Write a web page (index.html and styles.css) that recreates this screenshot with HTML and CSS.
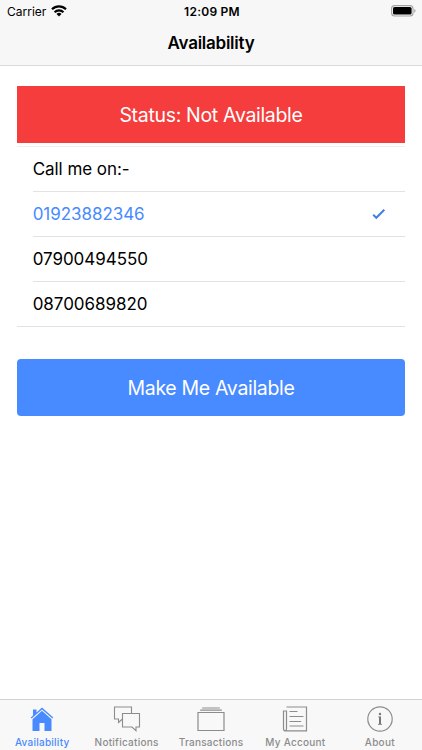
FILE: index.html
```html
<!DOCTYPE html>
<html lang="en">
<head>
    <meta charset="UTF-8">
    <meta name="viewport" content="width=device-width, initial-scale=1.0">
    <title>Availability</title>
    <link rel="stylesheet" href="styles.css">
</head>
<body>
    <header class="header">
        <div class="status-bar">
            <div class="carrier">
                <span>Carrier</span>
                <svg width="16" height="12" viewBox="0 0 16 12">
                    <g fill="none" stroke="#000" stroke-width="2.2">
                        <path d="M1 4.300a10 10 0 0 1 14 0"/>
                        <path d="M3.600 7.200a6.200 6.200 0 0 1 8.800 0"/>
                    </g>
                    <path d="M5.500 9a3.600 3.600 0 0 1 5 0L8 11.400z"/>
                </svg>
            </div>
            <div class="time">12:09 PM</div>
            <div class="battery">
                <svg width="26" height="12" viewBox="0 0 26 12">
                    <rect x=".6" y=".6" width="21.4" height="10.4" rx="3" fill="none" stroke="#a3a3a3" stroke-width="1.1"/>
                    <rect x="2" y="2" width="18.6" height="7.6" rx="1.6"/>
                    <path d="M23.3 4v3.8c1.6-.7 1.6-3.1 0-3.8z" fill="#999"/>
                </svg>
            </div>
        </div>
        <h1>Availability</h1>
    </header>

    <main class="content">
        <div class="status">Status: Not Available</div>

        <ul class="phone-list">
            <li class="item">Call me on:-</li>
            <li class="item selected">
                <span>01923882346</span>
                <svg width="14" height="12" viewBox="0 0 14 12">
                    <path d="M1.2 6.8l3.1 3L12.3 1.7" fill="none" stroke="#3f7fe6" stroke-width="2"/>
                </svg>
            </li>
            <li class="item">07900494550</li>
            <li class="item">08700689820</li>
        </ul>

        <button type="button" class="button">Make Me Available</button>
    </main>

    <nav class="tabs">
        <a class="tab active">
            <svg width="28" height="28" viewBox="0 0 28 28">
                <path fill="#488aff" d="M14 2.500L8.500 7.400V4.500H5v6L2.700 12.600l.9 1L14 4.400l10.400 9.200.9-1z"/>
                <path fill="#488aff" d="M14 5.800L4.500 14.200V26h7v-8h5v8h7V14.200z"/>
            </svg>
            <span>Availability</span>
        </a>
        <a class="tab">
            <svg width="28" height="28" viewBox="0 0 28 28">
                <g fill="none" stroke="#8c8c8c" stroke-width="1.100">
                    <path d="M9.500 14L5.500 17.500V14H1.500V2h17v6.500"/>
                    <path d="M9.500 8.500h17V22H23v3.700L19 22H9.500z"/>
                </g>
            </svg>
            <span>Notifications</span>
        </a>
        <a class="tab">
            <svg width="28" height="28" viewBox="0 0 28 28">
                <g fill="none" stroke="#8c8c8c" stroke-width="1.200">
                    <path d="M5.200 3h17.600M3.200 5.200h21.600"/>
                    <path d="M1 7.500h26v18H1z"/>
                </g>
            </svg>
            <span>Transactions</span>
        </a>
        <a class="tab">
            <svg width="28" height="28" viewBox="0 0 28 28">
                <g fill="none" stroke="#8c8c8c" stroke-width="1.200">
                    <path d="M5.500 2h20v23.900H4.700c-1.300 0-2.200-.9-2.200-2.200V6h3v17.800c0 1.200-.6 2.100-1.400 2.100"/>
                    <path d="M8.500 6.500h8M8.500 11.500h14M8.500 16.500h11.700M8.500 21h14"/>
                </g>
            </svg>
            <span>My Account</span>
        </a>
        <a class="tab">
            <svg width="28" height="28" viewBox="0 0 28 28">
                <circle cx="14" cy="14" r="12.200" fill="none" stroke="#8c8c8c" stroke-width="1.200"/>
                <circle cx="14" cy="9" r="1.200" fill="#777"/>
                <path fill="#777" d="M12.100 11.500H15v7.300l1 .3v.6h-4v-.6l1-.3v-6.400l-.9-.3z"/>
            </svg>
            <span>About</span>
        </a>
    </nav>
</body>
</html>
```
FILE: styles.css
```css
* {
    box-sizing: border-box;
}

body {
    font-family: Inter, "Liberation Sans", sans-serif;
    margin: 0;
    height: 100vh;
    display: flex;
    flex-direction: column;
    background-color: #fff;
    color: #000;
}

svg {
    flex-shrink: 0;
}

.header {
    height: 66px;
    background-color: #f7f7f7;
    border-bottom: 1px solid #dadada;
}

.status-bar {
    display: grid;
    grid-template-columns: 1fr auto 1fr;
    align-items: center;
    height: 22px;
    padding: 0 5px 0 7px;
    font-size: 12px;
}

.carrier {
    display: flex;
    align-items: center;
    gap: 5px;
}

.time {
    font-weight: 600;
    letter-spacing: 0.250px;
}

.battery {
    display: flex;
    justify-content: flex-end;
}

h1 {
    margin: 0;
    font-size: 17px;
    font-weight: 600;
    line-height: 42px;
    letter-spacing: -0.250px;
    text-align: center;
}

.content {
    flex: 1;
    padding: 20px 16.700px;
}

.status,
.button {
    display: block;
    width: 100%;
    height: 56.700px;
    font-family: inherit;
    font-size: 19.500px;
    font-weight: 400;
    line-height: 58px;
    letter-spacing: -0.320px;
    text-align: center;
    color: #fff;
}

.status {
    background-color: #f53d3d;
}

.phone-list {
    list-style: none;
    margin: 3px 0 32.800px;
    padding: 0;
    border-top: 1px solid #efefef;
    border-bottom: 1px solid #e2e2e2;
    font-size: 17px;
    letter-spacing: -0.050px;
}

.item {
    display: flex;
    align-items: center;
    justify-content: space-between;
    height: 45px;
    margin-left: 16px;
    padding-right: 19px;
    border-bottom: 1px solid #e2e2e2;
}

.item:last-child {
    height: 44px;
    border-bottom: none;
}

.selected {
    color: #488aff;
}

.button {
    padding: 0;
    border: none;
    border-radius: 4px;
    background-color: #488aff;
}

.tabs {
    display: flex;
    height: 51px;
    background-color: #f8f8f8;
    border-top: 1px solid #d2d2d2;
}

.tab {
    flex: 1;
    display: flex;
    flex-direction: column;
    align-items: center;
    padding-top: 5px;
    font-size: 10px;
    font-weight: 500;
    line-height: 18px;
    letter-spacing: 0.250px;
    color: #8c8c8c;
}

.active {
    color: #488aff;
}
```
